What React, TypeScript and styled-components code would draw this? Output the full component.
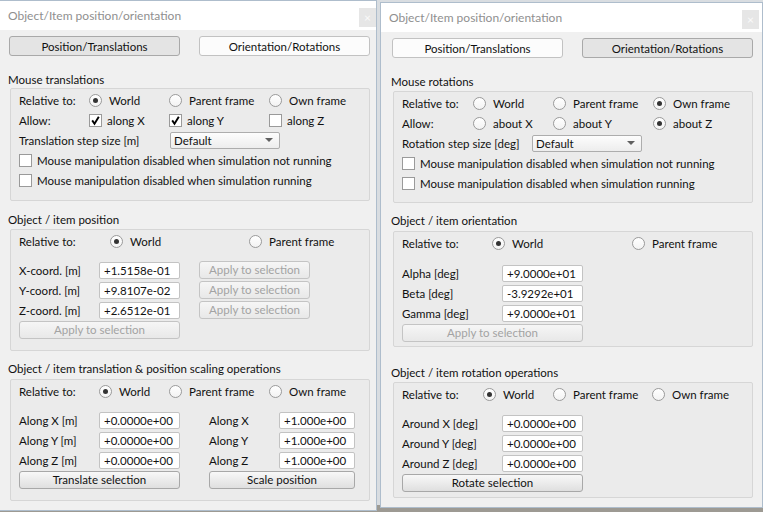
import styled, { createGlobalStyle } from 'styled-components';

const GlobalStyle = createGlobalStyle`
  html, body {
    margin: 0;
    padding: 0;
  }
  body {
    background: #9d9a93;
    font-family: Lato, 'Liberation Sans', sans-serif;
    font-size: 11.5px;
    color: #111;
  }
  * {
    box-sizing: border-box;
  }
`;

const Check = () => (
  <svg width="11" height="11" viewBox="0 0 11 11">
    <path d="M2.2 5.4 L4.5 8.7 L8.8 1.8" fill="none" stroke="#000" strokeWidth="1.9" />
  </svg>
);

const RadioItem = ({ label, on }: { label: string; on?: boolean }) => (
  <Option $gap={7}>
    <RadioDot $on={!!on} />
    <span>{label}</span>
  </Option>
);

const CheckItem = ({ label, on }: { label: string; on?: boolean }) => (
  <Option $gap={5}>
    <CheckBox>{on && <Check />}</CheckBox>
    <span>{label}</span>
  </Option>
);

const Header = ({ closeRight }: { closeRight: number }) => (
  <TitleBar>
    <TitleText>Object/Item position/orientation</TitleText>
    <CloseButton $mr={closeRight}>×</CloseButton>
  </TitleBar>
);

const Tabs = ({ active }: { active: 0 | 1 }) => (
  <TabRow>
    <TabButton $active={active === 0}>Position/Translations</TabButton>
    <TabButton $active={active === 1}>Orientation/Rotations</TabButton>
  </TabRow>
);

const StepRow = ({ label, col }: { label: string; col: number }) => (
  <Row $cols={`${col}px 110px`}>
    <span>{label}</span>
    <Combo>
      <span>Default</span>
      <Arrow />
    </Combo>
  </Row>
);

const ManipChecks = () => (
  <>
    <Row $cols="1fr">
      <CheckItem label="Mouse manipulation disabled when simulation not running" />
    </Row>
    <Row $cols="1fr">
      <CheckItem label="Mouse manipulation disabled when simulation running" />
    </Row>
  </>
);

const TranslationDialog = () => (
  <Window $ml={-1} $mt={0} $w={378} $h={511}>
    <Header closeRight={0} />
    <Body $pl={8}>
      <Tabs active={0} />

      <SectionTitle $mt={15}>Mouse translations</SectionTitle>
      <GroupBox $mt={0} $pb={10}>
        <Row $cols="70px 80px 100px 1fr">
          <span>Relative to:</span>
          <RadioItem label="World" on />
          <RadioItem label="Parent frame" />
          <RadioItem label="Own frame" />
        </Row>
        <Row $cols="70px 80px 100px 1fr">
          <span>Allow:</span>
          <CheckItem label="along X" on />
          <CheckItem label="along Y" on />
          <CheckItem label="along Z" />
        </Row>
        <StepRow label="Translation step size [m]" col={151} />
        <ManipChecks />
      </GroupBox>

      <SectionTitle $mt={10}>Object / item position</SectionTitle>
      <GroupBox $mt={1} $pb={10}>
        <Row $cols="91px 139px 1fr">
          <span>Relative to:</span>
          <RadioItem label="World" on />
          <RadioItem label="Parent frame" />
        </Row>
        {[
          ['X-coord. [m]', '+1.5158e-01'],
          ['Y-coord. [m]', '+9.8107e-02'],
          ['Z-coord. [m]', '+2.6512e-01'],
        ].map(([label, value], i) => (
          <Row key={label} $cols="80px 100px 111px" $mt={i === 0 ? 9 : 0}>
            <span>{label}</span>
            <Field $w={81} value={value} readOnly />
            <PushButton $w={111} disabled>
              Apply to selection
            </PushButton>
          </Row>
        ))}
        <Row $cols="1fr">
          <PushButton $w={161} disabled>
            Apply to selection
          </PushButton>
        </Row>
      </GroupBox>

      <SectionTitle $mt={9}>Object / item translation &amp; position scaling operations</SectionTitle>
      <GroupBox $mt={2} $pb={10}>
        <Row $cols="80px 70px 100px 1fr">
          <span>Relative to:</span>
          <RadioItem label="World" on />
          <RadioItem label="Parent frame" />
          <RadioItem label="Own frame" />
        </Row>
        {['X', 'Y', 'Z'].map((axis, i) => (
          <Row key={axis} $cols="80px 110px 70px 76px" $mt={i === 0 ? 9 : 0}>
            <span>Along {axis} [m]</span>
            <Field $w={81} value="+0.0000e+00" readOnly />
            <span>Along {axis}</span>
            <Field $w={76} value="+1.000e+00" readOnly />
          </Row>
        ))}
        <Row $cols="190px 146px">
          <PushButton $w={161}>Translate selection</PushButton>
          <PushButton $w={146}>Scale position</PushButton>
        </Row>
      </GroupBox>
    </Body>
  </Window>
);

const RotationDialog = () => (
  <Window $ml={3} $mt={2} $w={383} $h={506}>
    <Header closeRight={3} />
    <Body $pl={10}>
      <Tabs active={1} />

      <SectionTitle $mt={15}>Mouse rotations</SectionTitle>
      <GroupBox $mt={1} $pb={9}>
        <Row $cols="71px 80px 100px 1fr">
          <span>Relative to:</span>
          <RadioItem label="World" />
          <RadioItem label="Parent frame" />
          <RadioItem label="Own frame" on />
        </Row>
        <Row $cols="71px 80px 100px 1fr">
          <span>Allow:</span>
          <RadioItem label="about X" />
          <RadioItem label="about Y" />
          <RadioItem label="about Z" on />
        </Row>
        <StepRow label="Rotation step size [deg]" col={130} />
        <ManipChecks />
      </GroupBox>

      <SectionTitle $mt={9}>Object / item orientation</SectionTitle>
      <GroupBox $mt={2} $pb={3}>
        <Row $cols="90px 140px 1fr">
          <span>Relative to:</span>
          <RadioItem label="World" on />
          <RadioItem label="Parent frame" />
        </Row>
        {[
          ['Alpha [deg]', '+9.0000e+01'],
          ['Beta [deg]', '-3.9292e+01'],
          ['Gamma [deg]', '+9.0000e+01'],
        ].map(([label, value], i) => (
          <Row key={label} $cols="100px 81px" $mt={i === 0 ? 10 : 0}>
            <span>{label}</span>
            <Field $w={81} value={value} readOnly />
          </Row>
        ))}
        <Row $cols="1fr">
          <PushButton $w={181} disabled>
            Apply to selection
          </PushButton>
        </Row>
      </GroupBox>

      <SectionTitle $mt={17}>Object / item rotation operations</SectionTitle>
      <GroupBox $mt={1} $pb={4}>
        <Row $cols="81px 70px 99px 1fr">
          <span>Relative to:</span>
          <RadioItem label="World" on />
          <RadioItem label="Parent frame" />
          <RadioItem label="Own frame" />
        </Row>
        {['X', 'Y', 'Z'].map((axis, i) => (
          <Row key={axis} $cols="100px 81px" $mt={i === 0 ? 9 : 0}>
            <span>Around {axis} [deg]</span>
            <Field $w={81} value="+0.0000e+00" readOnly />
          </Row>
        ))}
        <Row $cols="1fr">
          <PushButton $w={181}>Rotate selection</PushButton>
        </Row>
      </GroupBox>
    </Body>
  </Window>
);

const App = () => {
  return (
    <>
      <GlobalStyle />
      <Page>
        <TranslationDialog />
        <RotationDialog />
      </Page>
    </>
  );
};

export default App;

const Page = styled.div`
  display: flex;
  align-items: flex-start;
  width: 763px;
  height: 512px;
  overflow: hidden;
  background: linear-gradient(#d9dde1 0 505px, #9d9a93 505px);
`;

const Window = styled.div<{ $ml: number; $mt: number; $w: number; $h: number }>`
  display: flex;
  flex-direction: column;
  flex: none;
  width: ${({ $w }) => $w}px;
  height: ${({ $h }) => $h}px;
  margin-left: ${({ $ml }) => $ml}px;
  margin-top: ${({ $mt }) => $mt}px;
  border: 1px solid #aebdcc;
  background: #f0f0f0;
  overflow: hidden;
`;

const TitleBar = styled.div`
  display: flex;
  justify-content: space-between;
  height: 29px;
  background: #fff;
  flex: none;
`;

const TitleText = styled.div`
  align-self: center;
  padding-left: 8px;
  color: #8f8f8f;
  font-size: 12px;
`;

const CloseButton = styled.div<{ $mr: number }>`
  display: flex;
  align-items: center;
  justify-content: center;
  width: 17px;
  height: 19px;
  margin-top: 7px;
  margin-right: ${({ $mr }) => $mr}px;
  background: #e6e6e6;
  color: #fafafa;
  font-size: 12px;
`;

const Body = styled.div<{ $pl: number }>`
  display: flex;
  flex-direction: column;
  padding: 6px 0 0 ${({ $pl }) => $pl}px;
`;

const TabRow = styled.div`
  display: flex;
  gap: 19px;
  margin-left: 1px;
`;

const TabButton = styled.div<{ $active: boolean }>`
  display: flex;
  align-items: center;
  justify-content: center;
  width: 171px;
  height: 20px;
  border-radius: 3px;
  border: 1px solid ${({ $active }) => ($active ? '#a9a9a9' : '#c2c2c2')};
  background: ${({ $active }) => ($active ? '#e4e4e4' : '#fcfcfc')};
`;

const SectionTitle = styled.div<{ $mt: number }>`
  height: 17px;
  line-height: 17px;
  margin-top: ${({ $mt }) => $mt}px;
`;

const GroupBox = styled.div<{ $mt: number; $pb: number }>`
  width: 360px;
  margin: ${({ $mt }) => $mt}px 0 0 2px;
  padding: 1px 8px ${({ $pb }) => $pb}px;
  border: 1px solid #d6d6d6;
  border-radius: 2px;
  background: #ebebeb;
`;

const Row = styled.div<{ $cols: string; $mt?: number }>`
  display: grid;
  grid-template-columns: ${({ $cols }) => $cols};
  align-items: center;
  height: 20px;
  margin-top: ${({ $mt }) => $mt ?? 0}px;
  white-space: nowrap;
`;

const Option = styled.div<{ $gap: number }>`
  display: flex;
  align-items: center;
  gap: ${({ $gap }) => $gap}px;
`;

const RadioDot = styled.span<{ $on: boolean }>`
  display: flex;
  align-items: center;
  justify-content: center;
  width: 13px;
  height: 13px;
  border-radius: 50%;
  border: 1px solid #9a9a9a;
  background: linear-gradient(#ffffff, #f3f3f3);

  &::after {
    content: '';
    display: ${({ $on }) => ($on ? 'block' : 'none')};
    width: 5px;
    height: 5px;
    border-radius: 50%;
    background: #333;
  }
`;

const CheckBox = styled.span`
  display: flex;
  align-items: center;
  justify-content: center;
  width: 13px;
  height: 13px;
  border: 1px solid #9a9a9a;
  background: #fff;
`;

const Combo = styled.div`
  display: flex;
  align-items: center;
  justify-content: space-between;
  width: 110px;
  height: 17px;
  padding: 0 6px 0 3px;
  border: 1px solid #adadad;
  border-radius: 2px;
  background: linear-gradient(#fdfdfd, #ededed);
`;

const Arrow = styled.span`
  width: 0;
  height: 0;
  border-left: 4px solid transparent;
  border-right: 4px solid transparent;
  border-top: 4px solid #606060;
`;

const Field = styled.input<{ $w: number }>`
  width: ${({ $w }) => $w}px;
  height: 17px;
  padding: 0 0 0 4px;
  border: 1px solid #c3c3c3;
  border-radius: 2px;
  background: #fff;
  font: inherit;
  color: #111;
  outline: none;
`;

const PushButton = styled.button<{ $w: number }>`
  width: ${({ $w }) => $w}px;
  height: 18px;
  padding: 0;
  border: 1px solid ${({ disabled }) => (disabled ? '#c4c4c4' : '#a8a8a8')};
  border-radius: 3px;
  background: ${({ disabled }) =>
    disabled ? 'linear-gradient(#f6f6f6, #e8e8e8)' : 'linear-gradient(#f8f8f8, #dfdfdf)'};
  color: ${({ disabled }) => (disabled ? '#a3a3a3' : '#111')};
  font: inherit;
  line-height: 16px;
`;
